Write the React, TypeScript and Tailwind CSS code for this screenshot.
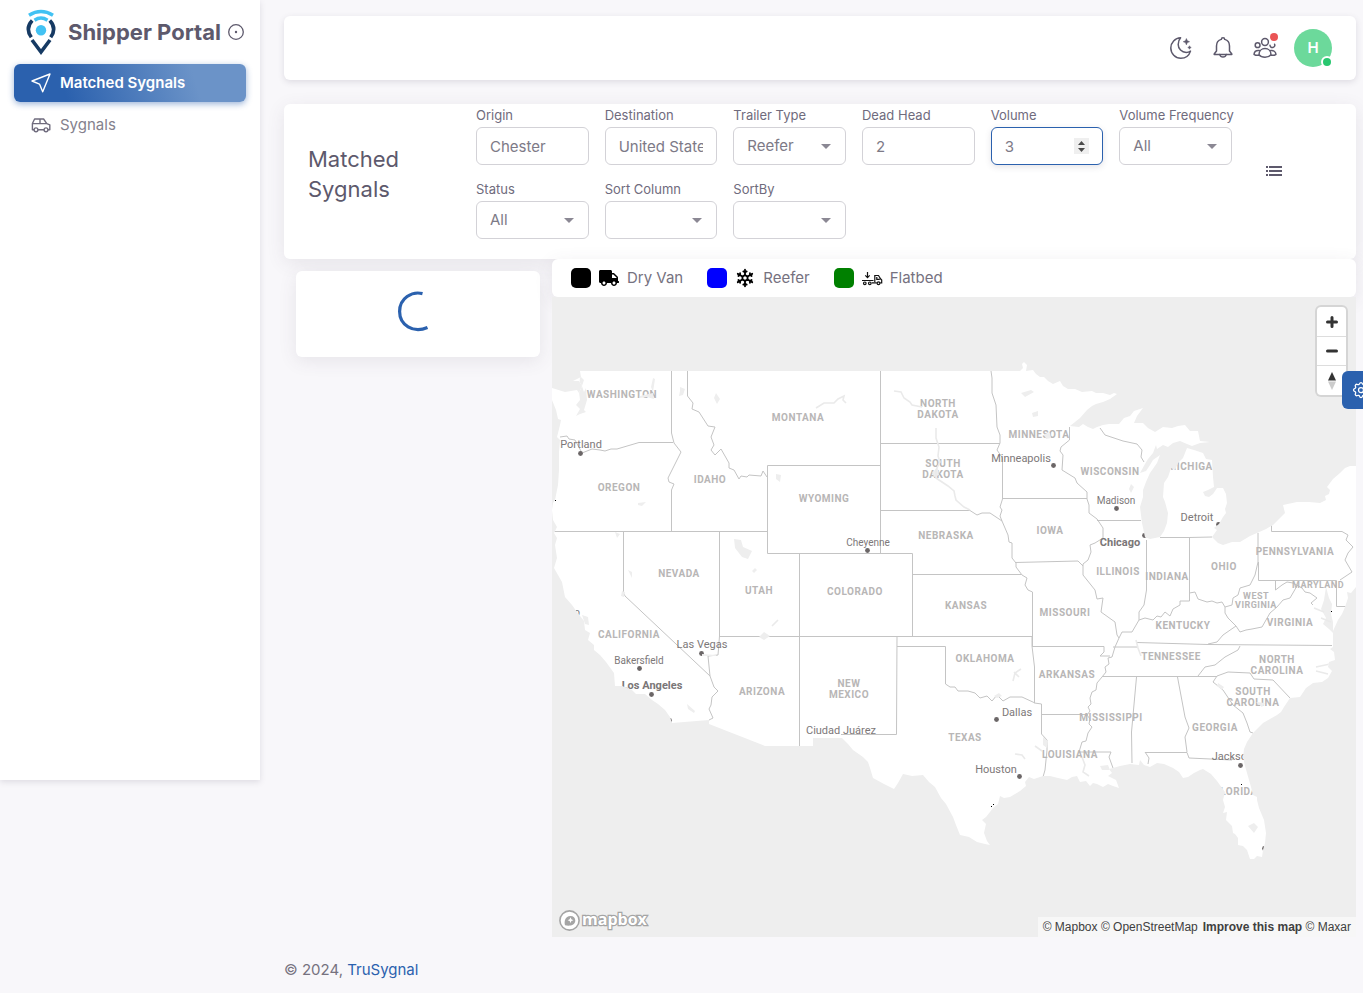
import React from "react";
import { FaTruck } from "react-icons/fa";
import { TbSettings, TbSnowflake } from "react-icons/tb";

const LAND =
  "M580 371H1020L1023 368L1022 364L1024 362L1027 365L1026 371L1033 370L1036 374L1040 377L1044 377L1048 381L1053 384L1060 381L1063 386L1068 389L1075 389L1082 392L1092 391L1096 393L1103 393L1110 395L1114 393L1117 394L1110 399L1103 402L1096 404L1092 406L1087 410L1080 418L1070 426L1079 427L1083 424L1088 427L1093 429L1097 427L1103 425L1109 424L1119 424L1124 418L1130 416L1134 411L1143 408L1137 416L1134 423L1143 423L1148 428L1155 432L1163 427L1172 428L1178 426L1185 425L1190 431L1198 431L1200 441L1210 442L1200 443L1192 446L1187 444L1180 441L1173 443L1168 447L1163 445L1157 449L1156 445L1153 453L1148 459L1145 464L1140 473L1146 471L1150 465L1153 460L1160 455L1157 463L1150 473L1146 482L1143 490L1143 497L1140 507L1142 523L1145 537L1150 539L1160 537L1164 531L1167 523L1168 513L1165 502L1163 497L1164 483L1168 477L1171 468L1175 470L1178 463L1183 458L1187 448L1194 450L1203 453L1206 459L1212 460L1213 477L1214 487L1208 490L1203 492L1205 496L1209 497L1213 494L1217 488L1223 488L1226 494L1227 503L1225 509L1226 513L1223 517L1219 524L1214 528L1217 530L1212 537L1218 543L1223 545L1232 542L1240 542L1250 536L1257 533L1266 529L1273 525L1279 519L1285 513L1283 505L1297 502L1309 502L1320 503L1326 500L1325 496L1329 494L1330 490L1327 487L1333 479L1340 473L1345 468L1350 466H1356V587L1351 593L1347 592L1348 598L1345 607L1342 614L1338 620L1333 631L1333 647L1330 649L1334 652L1335 660L1329 662L1328 667L1332 671L1328 678L1322 682L1313 683L1306 688L1300 697L1290 698L1284 707L1281 712L1277 715L1270 719L1263 723L1257 729L1253 733L1247 742L1244 749L1243 757L1245 766L1247 773L1251 787L1253 795L1257 797L1257 800L1259 808L1264 820L1266 833L1265 843L1263 850L1262 857L1257 856L1254 859H1250L1247 850L1243 846L1238 845L1238 838L1235 834L1233 833L1232 826L1226 820L1227 812L1223 813L1225 807L1223 800L1225 792L1217 781L1211 774L1203 769L1200 770L1194 773L1188 777L1183 778L1179 772L1173 768L1164 764L1157 763L1150 767L1144 765L1140 760L1139 765L1130 764L1120 766L1113 768L1109 769L1112 773L1108 776L1116 780L1119 788L1113 786L1108 784L1103 787L1097 784L1093 783L1090 786L1086 781L1080 782L1077 776L1072 777L1067 780L1058 778L1050 776L1043 776L1034 779L1029 777L1025 782L1026 786L1020 791L1010 797L1004 798L1000 796L998 804L993 808L990 812L986 817L982 820L986 824L984 833L987 841L990 845L985 844L977 842L969 837L960 835L956 825L953 817L946 804L941 798L935 787L929 782L923 775L912 776L903 774L898 783L894 789L884 784L873 778L870 768L868 762L863 757L853 750L848 744L842 738H813V746H765L709 724V720L672 723L670 717L665 710L658 704L652 700L645 694L636 694L632 690L622 686L615 686L614 673L606 662L600 655L594 650L594 645L588 640L590 633L585 630L584 621L577 612L572 605L565 597L562 582L558 575L554 568L557 558L555 545L557 538L554 533L557 527L553 520L552 510L553 503L555 500L558 485L559 470L559 452L560 440L557 437L560 425L561 420L558 419L556 410L552 400V388L565 392L577 390L579 393L582 386L579 381L573 381L581 377Z";

const BORDERS = [
  "M560 437L567 436L569 439L575 440L582 453L592 449L600 450L605 451L611 449L617 449L639 442.5H673",
  "M671.5 371V433L674 443L681 452L668 478L669 482L674 484L671.5 490V532",
  "M687.5 371V396L693 403L692 409L699 412L708 426L715 427L711 437L714 445L711 450L715 455L721 449L729 463V468L734 470L739 479L741 476L747 477L749 475L761 476L763 471L767 477",
  "M553 531.5H767.5M767.5 465.5H880.5M767.5 465.5V553.5H912.5V636.5M623.5 532V593L625 596L710 676M719.5 532V636L718 655L708 656L710 676L714 687L718 691L712 697L711 705L709 709L713 718L709 720M799.5 553V746M719 636.5H1032",
  "M880.5 371V553M880 443.5H1000M880 510.5H970L977 515L982 513L990 513L1002 521L1008 535L1009 542L1012 543V558L1016 563V567L1022 575L1027 578L1025 585L1028 590L1032.5 592V646",
  "M991 371L992 378L992 393L996 405L997 427L1000 435V443L997 450L1002.5 458V499L1000 507L1002 510L1000 516L1002 521M1002 498.5H1087",
  "M1069.5 427V440L1061 447L1060 451L1063 455L1062 470L1075 478L1077 483L1087 492V499L1089 505L1089 513L1097 519L1103 528V538L1095 543L1090 545L1091 552L1088 560L1083 564V575L1095 590L1097 599L1103 598L1101 612L1115 622L1117 635L1119 638",
  "M1015 562.5L1078 561L1083 566M1097 520.5H1141M1146.5 540V590L1144 605L1139 612V620L1132 632L1122 632L1119 638L1115 647L1112 657L1108 658L1109 664L1105 667L1106 672L1102 677L1097 683L1096 690L1092 692L1090 698L1091 704L1088 707L1090 711L1087 715L1090 719L1089 724L1092 727L1088 733L1086 741L1082 742L1079 752H1111L1109 757L1113 768",
  "M1160 537.5H1189.5V601L1180 601V605L1173 609L1170 616L1165 612L1161 617L1157 616L1153 620L1145 618L1139 620M1189 537.5L1212 537M1189.5 593L1195 592L1198 599L1207 602L1212 601L1217 603L1222 602L1225 607L1232 605L1233 598L1238 595L1240 588L1250 585L1255 575L1258 562V533",
  "M1258.5 562V580.5H1336.5V606.5H1346M1271.5 525V531.5H1342L1348 535L1346 540L1353 547L1348 553L1345 560L1352 572L1340 580M1275.5 581V590L1282 585L1287 582L1293 583L1302 588L1305 592L1310 593L1317 598L1311 603L1313 605",
  "M1297 586L1290 598L1283 600L1277 607L1270 613L1262 627L1252 629L1246 630L1240 632L1236 626L1228 618L1225 613V607M1236 626L1223 635L1217 642L1208 644M1137 642.5L1208 644.5L1332 645.5",
  "M1032 646.5H1104V652L1100 656H1110M1113 647H1137M1240 646L1238 650L1225 657L1215 665L1205 667L1198 676M1102 676.5H1217M1136.5 677L1131.5 732L1132 763M1177.5 677L1185 717L1189 728L1185 737L1187 752M1145 752.5H1187L1189 758L1232 760L1234 757M1145 752L1149 758L1148 764",
  "M1217 676L1213 682L1223 690L1233 705L1243 713L1247 723L1250 732L1253 733M1217 676L1228 672L1250 673L1254 679L1273 680L1290 698",
  "M912 574.5H1021M897 636L896.5 734.5H841M897 646.5H945.5V684L950 687L955 687L958 691L968 691L975 693L980 698L987 696L992 701L997 695L1003 701L1010 697L1022 697L1035 703M1032 636V646L1034.5 667V703L1041.5 704V734L1047 740V750L1045 770L1043 777M1041 714.5H1088",
  "M1100 428L1105 435L1123 441L1137 444L1142 450L1141 457L1144 462",
];

const LAKES =
  "M580 376L584 380L582 386L584 392L586 388L587 400L584 410L586 412L580 414L576 416L580 409L576 405L580 400L579 392Z M680 387L685 389L683 395L679 396L680 391Z M716 393L720 399L717 404L714 398Z M776 474L781 475L780 482L776 479Z M734 539L741 540L743 547L752 551L748 559L742 557L735 548Z M755 568L757 570L754 573L752 571Z M628 570L632 572L632 578Z M622 591L625 592L624 597L621 596Z M638 503L646 502L642 506L638 505Z M615 532L620 534L617 538Z M687 704L695 711L694 713L688 709Z M582 615L588 617L589 625L585 624Z M759 637L764 632L770 636L764 640Z M653 392L655 379L653 378L651 387Z M640 396L653 393L654 399L647 397L640 398Z M1021 393L1031 390L1034 392L1025 397Z M1032 413L1038 411L1038 416L1033 417Z M1044 434L1050 433L1051 438L1046 439Z M1131 484L1134 487L1131 493L1129 489Z M1248 826L1254 823L1258 827L1254 833Z M1326 587L1324 600L1321 609L1326 618L1323 624L1329 629L1333 633L1333 622L1331 614L1332 604L1329 598Z M1100 766L1108 765L1110 770L1102 770Z M932 472L938 468L939 475L934 477Z M1218 683L1224 687L1222 690L1217 686Z M1256 702L1265 703L1262 707Z M1043 737L1048 741L1047 748L1043 745Z M702 654L716 655L716 656L702 656Z M994 696L999 693L1002 696L997 698Z";

const RIVERS =
  "M894 391L901 392L904 398L910 402L912 405L922 407M936 428L936 438L939 447L938 456L940 462L936 470L936 478L945 484L948 486L954 491L955 496L956 500L964 507L970 510M816 408L824 403L834 403L838 399L844 396L843 400L846 403M1136 640L1138 648L1141 656M1013 681L1015 673L1021 669M1014 672L1019 677M1015 754L1022 755L1025 759M1035 746L1042 751M1324 612L1314 608M1331 622L1321 618M1330 664L1316 667M1328 674L1316 671M772 626L778 620M1082 757L1085 765L1083 772L1089 776";

type Label = [string, number, number];

const STATES: Label[] = [
  ["WASHINGTON", 622, 398], ["MONTANA", 798, 421], ["IDAHO", 710, 483], ["OREGON", 619, 491],
  ["WYOMING", 824, 502], ["NORTH", 938, 407], ["DAKOTA", 938, 418], ["SOUTH", 943, 467],
  ["DAKOTA", 943, 478], ["MINNESOTA", 1039, 438], ["WISCONSIN", 1110, 475], ["MICHIGAN", 1194, 470],
  ["NEBRASKA", 946, 539], ["IOWA", 1050, 534], ["NEVADA", 679, 577], ["UTAH", 759, 594],
  ["COLORADO", 855, 595], ["KANSAS", 966, 609], ["MISSOURI", 1065, 616], ["ILLINOIS", 1118, 575],
  ["INDIANA", 1167, 580], ["OHIO", 1224, 570], ["PENNSYLVANIA", 1295, 555], ["KENTUCKY", 1183, 629],
  ["VIRGINIA", 1290, 626], ["TENNESSEE", 1171, 660], ["NORTH", 1277, 663], ["CAROLINA", 1277, 674],
  ["SOUTH", 1253, 695], ["CAROLINA", 1253, 706], ["GEORGIA", 1215, 731], ["MISSISSIPPI", 1111, 721],
  ["LOUISIANA", 1070, 758], ["ARKANSAS", 1067, 678], ["OKLAHOMA", 985, 662], ["TEXAS", 965, 741],
  ["NEW", 849, 687], ["MEXICO", 849, 698], ["ARIZONA", 762, 695], ["CALIFORNIA", 629, 638],
  ["FLORIDA", 1236, 795],
];

const SMALL_STATES: Label[] = [["MARYLAND", 1318, 588], ["WEST", 1256, 599], ["VIRGINIA", 1256, 608]];

const CITIES: Label[] = [
  ["Portland", 581, 448], ["Minneapolis", 1021, 462], ["Las Vegas", 702, 648],
  ["Ciudad Juárez", 841, 734], ["Dallas", 1017, 716], ["Houston", 996, 773], ["Jacksonville", 1242, 760],
  ["Detroit", 1197, 521],
];
const SMALL_CITIES: Label[] = [
  ["Cheyenne", 868, 546], ["Madison", 1116, 504], ["Bakersfield", 639, 664], ["o", 577, 616],
];
const BIG_CITIES: Label[] = [["Chicago", 1120, 546], ["Los Angeles", 652, 689]];

const DOTS: [number, number][] = [
  [580, 453], [867, 550], [1053, 465], [1116, 508], [1218, 524], [1144, 535], [701, 653],
  [639, 668], [651, 694], [669, 720], [996, 719], [1019, 776], [1240, 765], [1264, 848],
];

function Labels({ items, className }: { items: Label[]; className: string }) {
  return (
    <g textAnchor="middle" className={className}>
      {items.map(([name, x, y]) => (
        <text key={name + x + y} x={x} y={y}>{name}</text>
      ))}
    </g>
  );
}

function UsMap() {
  return (
    <svg viewBox="552 297 804 640" preserveAspectRatio="xMidYMid slice" className="block h-[640px] w-full bg-[#eeeeee]" role="img" aria-label="Map of the United States">
      <defs>
        <clipPath id="land"><path d={LAND} /></clipPath>
      </defs>
      <path d={LAND} fill="#fff" />
      <g clipPath="url(#land)">
        <path d={BORDERS.join(" ")} fill="none" stroke="#c4c4c4" strokeWidth="1" strokeLinejoin="round" />
        <Labels items={STATES} className="fill-[#b8b6b6] font-['Roboto',sans-serif] text-[10px] font-bold tracking-wider" />
        <Labels items={SMALL_STATES} className="fill-[#b8b6b6] font-['Roboto',sans-serif] text-[9px] font-bold tracking-wider" />
        <Labels items={CITIES} className="fill-[#7d7879] font-['Roboto',sans-serif] text-[11px]" />
        <Labels items={SMALL_CITIES} className="fill-[#7d7879] font-['Roboto',sans-serif] text-[10px]" />
        <Labels items={BIG_CITIES} className="fill-[#7a7677] font-['Roboto',sans-serif] text-[11px] font-bold" />
        {DOTS.map(([x, y]) => (
          <circle key={x + "-" + y} cx={x + 0.5} cy={y + 0.5} r="2.4" fill="#6b6667" />
        ))}
        <path d={LAKES} fill="#eeeeee" />
        <path d={RIVERS} fill="none" stroke="#eaeaea" strokeWidth="1.6" />
        <path d="M555 500h1v1h-1zM991 806h1v1h-1zM993 804h1v1h-1zM1331 611h1v1h-1zM1241 784h1v1h-1z" fill="#000" />
      </g>
    </svg>
  );
}

function Logo() {
  return (
    <svg viewBox="0 0 32 46" className="h-[46px] w-8 shrink-0" fill="none" aria-hidden="true">
      <path d="M4 6.2Q16 -1.2 28 6.2" stroke="#42c2f3" strokeWidth="3.4" />
      <path d="M9.5 11.2Q16 7 22.5 11.2" stroke="#42c2f3" strokeWidth="3.4" />
      <circle cx="16" cy="21.2" r="5.2" fill="#42c2f3" />
      <path d="M7.2 11.6C2.6 16.5 2.2 22.5 6.3 28.3M24.8 11.6C29.4 16.5 29.8 22.5 25.7 28.3" stroke="#163a63" strokeWidth="3.6" />
      <path d="M7 31L16 43L25 31" stroke="#163a63" strokeWidth="3.6" />
    </svg>
  );
}

function MoonIcon() {
  return (
    <svg viewBox="0 0 24 24" className="size-6" fill="none" stroke="#5d596c" strokeWidth="1.5" strokeLinejoin="round" aria-hidden="true">
      <path d="M11.6 1.800C6 2 1.800 6.500 1.800 12c0 5.600 4.500 10.200 10 10.200 4.600 0 8.400-2.900 9.700-7.100-1.400.9-2.900 1.300-4.300 1.300-4.500 0-8-3.500-8-8 0-2.500.8-4.800 2.400-6.600z" />
      <path d="M17.400 2.600l.9 2.200 2.200.9-2.200.9-.9 2.200-.9-2.200-2.200-.9 2.200-.9zM20.500 9.800l.5 1.200 1.200.5-1.200.5-.5 1.200-.5-1.200-1.200-.5 1.200-.5z" fill="#5d596c" strokeWidth=".6" />
    </svg>
  );
}

function BellIcon() {
  return (
    <svg viewBox="0 0 24 24" className="size-6" fill="none" stroke="#5d596c" strokeWidth="1.5" strokeLinejoin="round" strokeLinecap="round" aria-hidden="true">
      <path d="M10.300 3.400a1.700 1.700 0 0 1 3.400 0c3 .8 4.800 3.400 4.800 6.600v5l2.300 3v.4H3.200V18l2.300-3v-5c0-3.200 1.800-5.800 4.800-6.600z" />
      <path d="M8.800 18.600a3.300 3.300 0 0 0 6.400 0" />
    </svg>
  );
}

function PeopleIcon() {
  return (
    <svg viewBox="0 0 24 24" className="size-6" fill="none" stroke="#5d596c" strokeWidth="1.5" strokeLinejoin="round" strokeLinecap="round" aria-hidden="true">
      <circle cx="12" cy="6" r="3.400" />
      <circle cx="4.600" cy="9.200" r="2.400" />
      <path d="M17 9.200a2.400 2.400 0 1 0 4.600-1" />
      <path d="M6 18.800c0-4 2.700-6.200 6-6.200s6 2.200 6 6.200c-1.500 1.800-3.600 2.500-6 2.500s-4.500-.7-6-2.500z" />
      <path d="M6.300 14.600c-2.800-.4-4.900.900-5.300 3.700 1.200.9 2.700 1.200 4.800 1M17.700 14.600c2.800-.4 4.900.900 5.300 3.700-1.200.9-2.700 1.200-4.800 1" />
    </svg>
  );
}

function CarIcon() {
  return (
    <svg viewBox="0 0 20 16" className="h-4 w-5" fill="none" stroke="#6f6b7d" strokeWidth="1.400" strokeLinejoin="round" aria-hidden="true">
      <path d="M3 12.800H1.400V6.500L3.600 2h9l3.200 4.600 3 1.200v5H17M7 12.800h6M1.600 6.600h14.200M9 2v4.600" />
      <circle cx="5" cy="12.800" r="1.900" />
      <circle cx="15" cy="12.800" r="1.900" />
    </svg>
  );
}

function FlatbedIcon() {
  return (
    <svg viewBox="0 0 22 16" className="h-4 w-[22px]" fill="none" stroke="#111" strokeWidth="1.200" aria-hidden="true">
      <path d="M6.500 2v5.500M4.300 5.400l2.200 2.200 2.200-2.200M1 10.500h11.500M13.800 12v-6.500h3.700l2.200 3.500 1 1v2.800h-1.500M10.800 12.800h5M15.800 7v2.300h3" />
      <circle cx="3.800" cy="13.300" r="1.300" />
      <circle cx="8.800" cy="13.300" r="1.300" />
      <circle cx="17.500" cy="13.300" r="1.400" />
    </svg>
  );
}

const FIELD =
  "h-[38px] w-full rounded-md border border-[#d3d2d7] bg-white px-[13px] text-[15px] text-[#7d7a87] outline-none";

function Field({ id, label, children }: { id: string; label: string; children: React.ReactNode }) {
  return (
    <div className="min-w-0">
      <label htmlFor={id} className="mb-[3px] block text-[13px] leading-[18px] whitespace-nowrap text-[#6f6b7d]">{label}</label>
      {children}
    </div>
  );
}

function SelectField({ id, label, value }: { id: string; label: string; value: string }) {
  return (
    <Field id={id} label={label}>
      <div className="relative">
        <select id={id} defaultValue={value} className={FIELD + " appearance-none"}>
          <option value={value}>{value}</option>
        </select>
        <svg viewBox="0 0 10 5" className="pointer-events-none absolute top-[17px] right-[15px] h-[5px] w-2.5" aria-hidden="true">
          <path d="M0 0h10L5 5z" fill="#8b8894" />
        </svg>
      </div>
    </Field>
  );
}

function Legend({ swatch, icon, text }: { swatch: string; icon: React.ReactNode; text: string }) {
  return (
    <div className="flex items-center">
      <span className={"size-5 rounded-[5px] " + swatch} />
      <span className="mr-[7px] ml-[7px] flex w-[22px] justify-center text-black">{icon}</span>
      <span>{text}</span>
    </div>
  );
}

export default function App() {
  return (
    <div className="relative flex min-h-screen items-start overflow-hidden bg-[#f8f7fa] font-['Inter',sans-serif] text-[15px] text-[#76727f]">
      <aside className="h-[780px] w-[260px] shrink-0 bg-white shadow-[0_2px_6px_rgba(75,70,92,0.15)]">
        <div className="flex h-16 items-center pr-4 pl-[25px]">
          <Logo />
          <span className="ml-[11px] flex-1 text-[22px] font-bold whitespace-nowrap text-[#5d596c]">Shipper Portal</span>
          <button aria-label="Pin menu" className="shrink-0">
            <svg viewBox="0 0 16 16" className="size-4" aria-hidden="true">
              <circle cx="8" cy="8" r="7.300" fill="none" stroke="#5d596c" strokeWidth="1.300" />
              <circle cx="8" cy="8" r="1.200" fill="#5d596c" />
            </svg>
          </button>
        </div>
        <nav className="flex flex-col gap-1 px-3.5">
          <a href="#matched" className="flex h-[38px] items-center gap-2 rounded-md bg-[linear-gradient(72deg,#2b61ae_22%,#6b93c8_77%)] pl-4 font-semibold text-white shadow-[0_2px_6px_rgba(43,97,174,0.48)]">
            <svg viewBox="0 0 22 22" className="size-[22px]" fill="none" stroke="#fff" strokeWidth="1.400" strokeLinejoin="round" aria-hidden="true">
              <path d="M2 9L20 2l-7.300 17.800-3.200-7.700z" />
            </svg>
            Matched Sygnals
          </a>
          <a href="#sygnals" className="flex h-[38px] items-center gap-[9px] pl-[17px] text-[#84818d]">
            <CarIcon />
            Sygnals
          </a>
        </nav>
      </aside>

      <main className="min-w-0 flex-1 pt-4 pr-[7px] pl-6">
        <header className="flex h-16 items-center justify-end rounded-md bg-white pr-6 shadow-[0_2px_6px_rgba(75,70,92,0.15)]">
          <div className="flex items-center gap-[18px]">
            <button aria-label="Dark mode"><MoonIcon /></button>
            <button aria-label="Notifications"><BellIcon /></button>
            <button aria-label="Team" className="relative">
              <PeopleIcon />
              <span className="absolute -top-[3px] -right-px size-2 rounded-full bg-[#ea5455]" />
            </button>
          </div>
          <button aria-label="Account" className="relative ml-[17px] flex size-[38px] items-center justify-center rounded-full bg-[#6cd99b] font-semibold text-white">
            H
            <span className="absolute right-px bottom-px size-2 rounded-full bg-[#28c76f] ring-2 ring-white" />
          </button>
        </header>

        <section className="mt-6 flex min-h-[155px] rounded-md bg-white shadow-[0_4px_18px_rgba(75,70,92,0.1)]">
          <h1 className="w-48 shrink-0 self-center pb-4 pl-6 text-[22px] leading-[30px] text-[#5d596c]">
            Matched<br />Sygnals
          </h1>
          <form className="grid flex-1 grid-cols-6 content-start gap-x-4 gap-y-[15px] pt-0.5">
            <Field id="origin" label="Origin"><input id="origin" defaultValue="Chester" className={FIELD} /></Field>
            <Field id="destination" label="Destination"><input id="destination" defaultValue="United States" className={FIELD} /></Field>
            <SelectField id="trailer" label="Trailer Type" value="Reefer" />
            <Field id="deadhead" label="Dead Head"><input id="deadhead" defaultValue="2" className={FIELD} /></Field>
            <Field id="volume" label="Volume">
              <div className="relative">
                <input
                  id="volume"
                  type="number"
                  defaultValue="3"
                  className="h-[38px] w-full appearance-none rounded-md border border-[#2b61ae] bg-white px-[13px] text-[15px] text-[#7d7a87] shadow-[0_2px_6px_rgba(75,70,92,0.15)] outline-none [&::-webkit-inner-spin-button]:appearance-none"
                />
                <svg viewBox="0 0 15 16" className="pointer-events-none absolute top-[11px] right-3.5 h-4 w-[15px] bg-[#efefef]" aria-hidden="true">
                  <path d="M4 7L7.500 3L11 7zM4 10h7L7.500 14z" fill="#4a4a4a" />
                </svg>
              </div>
            </Field>
            <SelectField id="frequency" label="Volume Frequency" value="All" />
            <SelectField id="status" label="Status" value="All" />
            <SelectField id="sortcolumn" label="Sort Column" value="" />
            <SelectField id="sortby" label="SortBy" value="" />
          </form>
          <div className="flex w-[124px] shrink-0 items-center pb-[22px] pl-[34px]">
            <button aria-label="List view">
              <svg viewBox="0 0 16 10" className="h-2.5 w-4" fill="#5d596c" aria-hidden="true">
                <path d="M0 0h2v2H0zM3 0H16v2H3zM0 4h2v2H0zM3 4H16v2H3zM0 8h2v2H0zM3 8H16v2H3z" />
              </svg>
            </button>
          </div>
        </section>

        <section className="flex items-start">
          <div className="w-1/4 shrink-0 p-3">
            <div className="flex h-[86px] items-center justify-center rounded-md bg-white pb-1.5 shadow-[0_4px_18px_rgba(75,70,92,0.1)]">
              <svg viewBox="0 0 44 44" className="size-11" role="img" aria-label="Loading">
                <path d="M26.500 4.600C16 2 3.600 9 3.600 22.500C3.600 36 17 44.500 31.500 38.500" fill="none" stroke="#2b61ae" strokeWidth="3.200" />
              </svg>
            </div>
          </div>
          <div className="min-w-0 flex-1">
            <div className="flex h-[38px] items-center gap-6 rounded-md bg-white pl-[19px] shadow-[0_4px_18px_rgba(75,70,92,0.1)]">
              <Legend swatch="bg-black" icon={<FaTruck className="h-4 w-5" />} text="Dry Van" />
              <Legend swatch="bg-[#0000ff]" icon={<TbSnowflake className="size-5" strokeWidth={2.2} />} text="Reefer" />
              <Legend swatch="bg-[#008000]" icon={<FlatbedIcon />} text="Flatbed" />
            </div>
            <div className="relative">
              <UsMap />
              <div className="absolute top-2.5 right-2.5 flex w-[29px] flex-col divide-y divide-[#dddddd] rounded bg-white shadow-[0_0_0_2px_rgba(0,0,0,0.1)]">
                <button aria-label="Zoom in" className="flex h-[30px] items-center justify-center">
                  <svg viewBox="0 0 12 12" className="size-3" stroke="#333" strokeWidth="3" strokeLinecap="round" aria-hidden="true"><path d="M6 1.500v9M1.500 6h9" /></svg>
                </button>
                <button aria-label="Zoom out" className="flex h-[29px] items-center justify-center">
                  <svg viewBox="0 0 12 12" className="size-3" stroke="#333" strokeWidth="3" strokeLinecap="round" aria-hidden="true"><path d="M1.500 6h9" /></svg>
                </button>
                <button aria-label="Reset bearing" className="flex h-[29px] items-center justify-center">
                  <svg viewBox="0 0 10 18" className="h-[18px] w-2.5" aria-hidden="true"><path d="M1 8.500L5 0l4 8.500z" fill="#333" /><path d="M1 9.500L5 18l4-8.500z" fill="#ccc" /></svg>
                </button>
              </div>
              <a href="#mapbox" aria-label="Mapbox" className="absolute bottom-1 left-1.5">
                <svg viewBox="0 0 100 26" className="h-[26px] w-[100px]">
                  <circle cx="11.500" cy="13.500" r="9.600" fill="#fff" stroke="#a5a5a5" strokeWidth="1.600" />
                  <path d="M7 18.300c-1-3.800 0-9 5.500-9.300 3 0 4.800 2 4.800 4.600 0 4.800-5.800 6-10.300 4.700z" fill="#a5a5a5" />
                  <path d="M12.500 10.300l.9 2 2 .9-2 .9-.9 2-.9-2-2-.9 2-.9z" fill="#fff" />
                  <text x="24" y="18" className="fill-white stroke-[#a5a5a5] stroke-[2.500px] font-['Open_Sans',sans-serif] text-[16px] font-bold [paint-order:stroke]">mapbox</text>
                </svg>
              </a>
              <div className="absolute right-0 bottom-0 flex h-5 items-center gap-[5px] bg-white/50 px-[5px] font-['Liberation_Sans',sans-serif] text-[12px] whitespace-nowrap text-[#404040]">
                <span><a href="#mapbox-about">© Mapbox</a> <a href="#osm">© OpenStreetMap</a></span>
                <span><a href="#improve" className="font-bold">Improve this map</a> <a href="#maxar">© Maxar</a></span>
              </div>
            </div>
          </div>
        </section>

        <footer className="pt-[22px] leading-[22px]">
          © 2024, <a href="#trusygnal" className="text-[#2b61ae]">TruSygnal</a>
        </footer>
      </main>

      <button aria-label="Customize" className="absolute top-[371px] -right-[17px] flex size-[38px] items-center rounded-l-md bg-[#2b61ae] pl-[9px] text-white">
        <TbSettings className="size-5" strokeWidth={1.5} />
      </button>
    </div>
  );
}
